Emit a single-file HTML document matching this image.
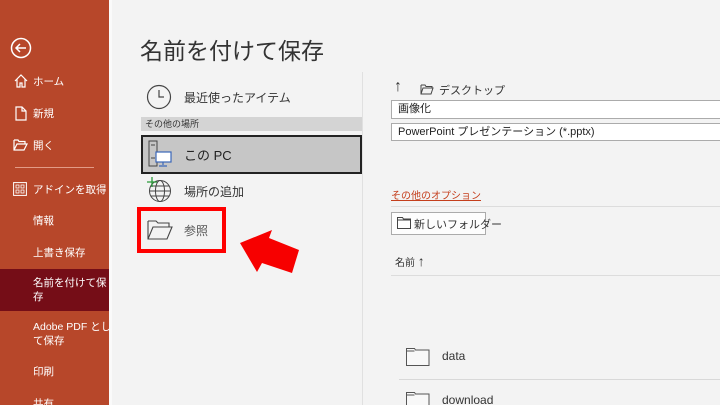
<!DOCTYPE html>
<html><head><meta charset="utf-8"><style>
*{margin:0;padding:0;box-sizing:border-box}
html,body{width:720px;height:405px;overflow:hidden}
body{background:#f3f3f3;font-family:"Liberation Sans","Noto Sans CJK JP",sans-serif;position:relative;color:#333}
.a{position:absolute;white-space:nowrap}
#sb{position:absolute;left:0;top:0;width:109px;height:405px;background:#b7472a;color:#fff}
#sb .a{font-size:10.5px;color:#fff}
.in{position:absolute;background:#fff;border:1px solid #ababab;font-size:11px;padding-left:6px;color:#222}
</style></head><body>
<div id="sb">
<svg class="a" style="left:10px;top:37px" width="22" height="22" viewBox="0 0 22 22"><circle cx="11" cy="11" r="9.5" fill="none" stroke="#fff" stroke-width="1.5"/><path d="M16 11H6M10 7l-4 4 4 4" fill="none" stroke="#fff" stroke-width="1.5"/></svg>
<svg class="a" style="left:14px;top:74px" width="14" height="14" viewBox="0 0 14 14"><path d="M1 7L7 1l6 6M3 5v8h3V9h2v4h3V5" fill="none" stroke="#fff" stroke-width="1.2"/></svg>
<div class="a" style="left:33px;top:74px">ホーム</div>
<svg class="a" style="left:15px;top:106px" width="12" height="15" viewBox="0 0 12 15"><path d="M1 1h6l4 4v9H1z M7 1v4h4" fill="none" stroke="#fff" stroke-width="1.2"/></svg>
<div class="a" style="left:33px;top:106px">新規</div>
<svg class="a" style="left:13px;top:139px" width="15" height="12" viewBox="0 0 15 12"><path d="M1 1h4l1 1.5h6V5M1 1v10h10l3-6H4l-3 6" fill="none" stroke="#fff" stroke-width="1.2"/></svg>
<div class="a" style="left:33px;top:138px">開く</div>
<div class="a" style="left:15px;top:167px;width:79px;height:1px;background:#e39b86"></div>
<svg class="a" style="left:13px;top:182px" width="14" height="14" viewBox="0 0 14 14"><rect x=".6" y=".6" width="12.8" height="12.8" fill="none" stroke="#fff"/><rect x="3" y="3" width="3" height="3" fill="none" stroke="#fff" stroke-width=".8"/><rect x="8" y="3" width="3" height="3" fill="none" stroke="#fff" stroke-width=".8"/><rect x="3" y="8" width="3" height="3" fill="none" stroke="#fff" stroke-width=".8"/><rect x="8" y="8" width="3" height="3" fill="none" stroke="#fff" stroke-width=".8"/></svg>
<div class="a" style="left:33px;top:182px">アドインを取得</div>
<div class="a" style="left:33px;top:213px">情報</div>
<div class="a" style="left:33px;top:245px">上書き保存</div>
<div class="a" style="left:0;top:269px;width:109px;height:42px;background:#750d17"></div>
<div class="a" style="left:33px;top:276px;line-height:14px">名前を付けて保<br>存</div>
<div class="a" style="left:33px;top:320px;line-height:14px">Adobe PDF とし<br>て保存</div>
<div class="a" style="left:33px;top:364px">印刷</div>
<div class="a" style="left:33px;top:396px">共有</div>
</div>
<div class="a" style="left:109px;top:0;width:3px;height:405px;background:#fafafa"></div>
<div class="a" style="left:140px;top:32px;font-size:23px;color:#333">名前を付けて保存</div>
<svg class="a" style="left:146px;top:84px" width="26" height="26" viewBox="0 0 26 26"><circle cx="13" cy="13" r="11.5" fill="none" stroke="#444" stroke-width="1.2"/><path d="M13 6v7h5" fill="none" stroke="#444" stroke-width="1.2"/></svg>
<div class="a" style="left:184px;top:89px;font-size:12px">最近使ったアイテム</div>
<div class="a" style="left:141px;top:117px;width:221px;height:14px;background:#d4d4d4;font-size:9px;padding-left:4px;line-height:14px">その他の場所</div>
<div class="a" style="left:141px;top:135px;width:221px;height:39px;background:#c6c6c6;border:2px solid #222"></div>
<svg class="a" style="left:147px;top:140px" width="26" height="28" viewBox="0 0 26 28"><path d="M2 1h8v25H2z M4 5h4M4 18h4" fill="none" stroke="#444" stroke-width="1"/><rect x="9" y="12" width="15" height="10" fill="#fff" stroke="#3a67b8" stroke-width="1.2"/><path d="M16 22v3M12 26h8" stroke="#3a67b8" stroke-width="1.2"/></svg>
<div class="a" style="left:184px;top:145px;font-size:13px;color:#222">この PC</div>
<svg class="a" style="left:146px;top:176px" width="28" height="28" viewBox="0 0 28 28"><circle cx="14" cy="15" r="10.5" fill="none" stroke="#444"/><ellipse cx="14" cy="15" rx="4.5" ry="10.5" fill="none" stroke="#444"/><path d="M3.5 15h21M5 10h18M5 20h18" stroke="#444" stroke-width=".9"/><path d="M6 1v10M1 6h10" stroke="#2a9a3a" stroke-width="1.3"/></svg>
<div class="a" style="left:184px;top:183px;font-size:12px">場所の追加</div>
<svg class="a" style="left:147px;top:220px" width="26" height="20" viewBox="0 0 26 20"><path d="M1 1h8l2 2h11v4M1 1v18h19l5-12H6L1 19" fill="none" stroke="#444" stroke-width="1.1"/></svg>
<div class="a" style="left:184px;top:222px;font-size:12px;color:#555">参照</div>
<div class="a" style="left:137px;top:207px;width:89px;height:46px;border:4px solid #f00"></div>
<svg class="a" style="left:230px;top:220px" width="80" height="60" viewBox="230 220 80 60"><polygon points="240,243 272,230 269,238 299,250 292,273 262,263 257,272" fill="#f70000"/></svg>
<div class="a" style="left:362px;top:72px;width:1px;height:333px;background:#e0e0e0"></div>
<div class="a" style="left:394px;top:78px;font-size:16px;color:#333">↑</div>
<svg class="a" style="left:420px;top:84px" width="14" height="11" viewBox="0 0 14 11"><path d="M1 1h4l1 1.5h6V4M1 1v9h10l2-6H3L1 10" fill="none" stroke="#444"/></svg>
<div class="a" style="left:439px;top:82px;font-size:11px;color:#333">デスクトップ</div>
<div class="in" style="left:391px;top:100px;width:330px;height:19px;line-height:17px">画像化</div>
<div class="in" style="left:391px;top:123px;width:330px;height:18px;line-height:16px">PowerPoint プレゼンテーション (*.pptx)</div>
<div class="a" style="left:391px;top:187px;font-size:10px;color:#c43e1c;text-decoration:underline">その他のオプション</div>
<div class="a" style="left:391px;top:206px;width:330px;height:1px;background:#dcdcdc"></div>
<div class="a" style="left:391px;top:212px;width:95px;height:23px;border:1px solid #ababab;background:#fdfdfd"></div>
<svg class="a" style="left:397px;top:217px" width="14" height="12" viewBox="0 0 14 12"><path d="M.5 .5h5l1 1.5h7v9.5H.5z M.5 3h13" fill="none" stroke="#444"/></svg>
<div class="a" style="left:414px;top:216px;font-size:11px;color:#333">新しいフォルダー</div>
<div class="a" style="left:395px;top:253px;font-size:10px;color:#333">名前 <span style="font-size:14px">↑</span></div>
<div class="a" style="left:391px;top:275px;width:330px;height:1px;background:#dcdcdc"></div>
<svg class="a" style="left:406px;top:348px" width="24" height="18" viewBox="0 0 24 18"><path d="M.5 .5h8l1 1.5h13.5v15.5H.5z" fill="#f8f8f8" stroke="#555"/><path d="M.5 3h8" stroke="#555"/></svg>
<div class="a" style="left:442px;top:349px;font-size:12px;color:#333">data</div>
<div class="a" style="left:399px;top:379px;width:322px;height:1px;background:#d8d8d8"></div>
<svg class="a" style="left:406px;top:392px" width="24" height="18" viewBox="0 0 24 18"><path d="M.5 .5h8l1 1.5h13.5v15.5H.5z" fill="#f8f8f8" stroke="#555"/><path d="M.5 3h8" stroke="#555"/></svg>
<div class="a" style="left:442px;top:393px;font-size:12px;color:#333">download</div>
</body></html>
